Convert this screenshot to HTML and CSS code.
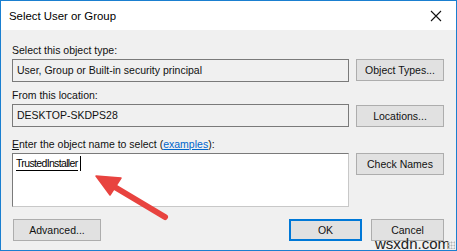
FILE: index.html
```html
<!DOCTYPE html>
<html>
<head>
<meta charset="utf-8">
<link rel="stylesheet" href="styles.css">
</head>
<body>
<div class="window">
  <div class="titlebar">
    <span class="title">Select User or Group</span>
    <svg class="close" width="12" height="12" viewBox="0 0 12 12"><path d="M1 1L11 11M11 1L1 11" stroke="#111" stroke-width="1.1" fill="none"/></svg>
  </div>
  <div class="content">
    <div class="label l1">Select this object type:</div>
    <div class="row r1">
      <div class="field">User, Group or Built-in security principal</div>
      <div class="btn">Object Types...</div>
    </div>
    <div class="label l2">From this location:</div>
    <div class="row r2">
      <div class="field">DESKTOP-SKDPS28</div>
      <div class="btn">Locations...</div>
    </div>
    <div class="label l3"><u>E</u>nter the object name to select (<span class="link">examples</span>):</div>
    <div class="row r3">
      <div class="textarea"><span class="name">TrustedInstaller</span><span class="caret"></span></div>
      <div class="btn">Check Names</div>
    </div>
    <div class="bottom">
      <div class="btn adv">Advanced...</div>
      <div class="spacer"></div>
      <div class="btn ok">OK</div>
      <div class="btn cancel">Cancel</div>
    </div>
  </div>
  <svg class="arrow" width="457" height="251" viewBox="0 0 457 251">
    <line x1="113" y1="186" x2="165" y2="217" stroke="#e8433f" stroke-width="6" stroke-linecap="round"/>
    <polygon points="96,176 121,178 110,195" fill="#e8433f" stroke="#e8433f" stroke-width="1.5" stroke-linejoin="round"/>
  </svg>
  <div class="watermark">wsxdn.com</div>
  <div class="grip"></div>
</div>
</body>
</html>
```
FILE: styles.css
```css
html, body {
  margin: 0;
  padding: 0;
  background: #ffffff;
}
body {
  font-family: "Liberation Sans", Arial, sans-serif;
  font-size: 10.5px;
  color: #000;
}
.window {
  position: relative;
  width: 457px;
  height: 251px;
  box-sizing: border-box;
  border: 1px solid #1a7fd0;
  background: #f0f0f0;
  overflow: hidden;
}
.titlebar {
  height: 29px;
  background: #ffffff;
  display: flex;
  align-items: center;
  padding-left: 8px;
  padding-right: 14px;
}
.title {
  flex: 1;
  font-size: 11.4px;
  padding-top: 1px;
}
.close {
  display: block;
}
.content {
  padding: 0 12px 0 11px;
}
.label {
  height: 15px;
  line-height: 15px;
  color: #111;
}
.l1 { margin-top: 13px; }
.l2 { margin-top: 6px; }
.l3 { margin-top: 10px; }
.row {
  display: flex;
  gap: 7px;
  margin-top: 1px;
}
.field {
  width: 337px;
  height: 23px;
  box-sizing: border-box;
  border: 1px solid #7a7a7a;
  background: #f0f0f0;
  padding-left: 4px;
  line-height: 21px;
  color: #111;
}
.btn {
  width: 88px;
  height: 22px;
  box-sizing: border-box;
  border: 1px solid #adadad;
  background: #e1e1e1;
  text-align: center;
  line-height: 20px;
  color: #111;
}
.r2 .btn { margin-top: 1px; }
.textarea {
  width: 337px;
  height: 54px;
  box-sizing: border-box;
  border: 1px solid #7a7a7a;
  border-right-color: #c8c8c8;
  border-bottom-color: #c8c8c8;
  background: #ffffff;
  padding: 2px 0 0 3px;
  display: flex;
  align-items: flex-start;
}
.name {
  line-height: 14px;
  border-bottom: 1px solid #000;
  letter-spacing: -0.65px;
}
.caret {
  width: 1px;
  height: 15px;
  background: #000;
  margin-left: 2px;
}
.bottom {
  display: flex;
  margin-top: 12px;
}
.spacer { flex: 1; }
.adv { width: 88px; margin-left: 1px; }
.ok {
  width: 73px;
  border: 2px solid #0078d7;
  line-height: 18px;
}
.cancel {
  width: 73px;
  margin-left: 9px;
}
.link {
  color: #0066cc;
  text-decoration: underline;
}
.arrow {
  position: absolute;
  left: -1px;
  top: -1px;
  pointer-events: none;
}
.watermark {
  position: absolute;
  right: 6px;
  bottom: -1px;
  font-family: "Liberation Sans", Arial, sans-serif;
  font-size: 15px;
  color: #222;
  line-height: 15px;
}
.grip {
  position: absolute;
  right: 1px;
  bottom: 1px;
  width: 8px;
  height: 8px;
  background-image: radial-gradient(circle, #b5b5b5 0.8px, transparent 1.2px);
  background-size: 3px 3px;
}
```
